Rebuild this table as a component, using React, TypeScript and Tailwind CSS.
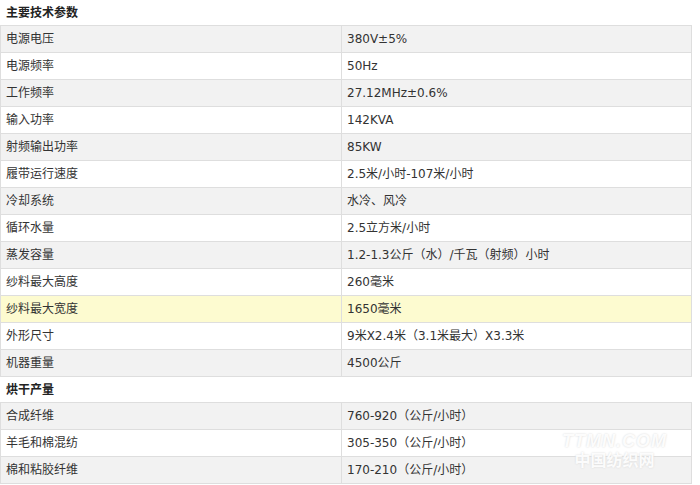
const specs: [string, string][] = [
  ["电源电压", "380V±5%"],
  ["电源频率", "50Hz"],
  ["工作频率", "27.12MHz±0.6%"],
  ["输入功率", "142KVA"],
  ["射频输出功率", "85KW"],
  ["履带运行速度", "2.5米/小时-107米/小时"],
  ["冷却系统", "水冷、风冷"],
  ["循环水量", "2.5立方米/小时"],
  ["蒸发容量", "1.2-1.3公斤（水）/千瓦（射频）小时"],
  ["纱料最大高度", "260毫米"],
  ["纱料最大宽度", "1650毫米"],
  ["外形尺寸", "9米X2.4米（3.1米最大）X3.3米"],
  ["机器重量", "4500公斤"],
];

const output: [string, string][] = [
  ["合成纤维", "760-920（公斤/小时）"],
  ["羊毛和棉混纺", "305-350（公斤/小时）"],
  ["棉和粘胶纤维", "170-210（公斤/小时）"],
];

function Section({ title }: { title: string }) {
  return (
    <div className="h-[26px] border-b border-[#dedede] flex items-center pl-[6px] font-bold text-[#222]">
      {title}
    </div>
  );
}

function Row({ label, value, index, hot }: { label: string; value: string; index: number; hot?: boolean }) {
  const bg = hot ? "bg-[#fdfbd0]" : index % 2 === 0 ? "bg-[#f2f2f2]" : "bg-white";
  return (
    <div className={`grid grid-cols-[341px_1fr] h-[27px] border-b border-x border-[#dedede] ${bg}`}>
      <div className="flex items-center pl-[5px] border-r border-[#dedede]">{label}</div>
      <div className="flex items-center pl-[5px]">{value}</div>
    </div>
  );
}

export default function App() {
  return (
    <div
      className="relative w-[700px] h-[485px] overflow-hidden bg-white text-[12px] text-[#333]"
      style={{ fontFamily: '"DejaVu Sans", "Noto Sans CJK SC", sans-serif' }}
    >
      <div className="w-[692px]">
        <Section title="主要技术参数" />
        {specs.map(([l, v], i) => (
          <Row key={l} label={l} value={v} index={i} hot={i === 10} />
        ))}
        <Section title="烘干产量" />
        {output.map(([l, v], i) => (
          <Row key={l} label={l} value={v} index={i} />
        ))}
      </div>
      <div className="absolute left-[562px] top-[433px] flex flex-col items-center gap-[2px] text-white/90 pointer-events-none [text-shadow:0_0_2px_#d4d4d4]">
        <span
          className="italic font-bold text-[18px] leading-[16px] tracking-[1px]"
          style={{ fontFamily: '"Liberation Sans", sans-serif' }}
        >
          TTMN.COM
        </span>
        <span
          className="font-bold text-[16px] leading-[17px]"
          style={{ fontFamily: '"Noto Sans CJK SC", sans-serif' }}
        >
          中国纺织网
        </span>
      </div>
    </div>
  );
}
